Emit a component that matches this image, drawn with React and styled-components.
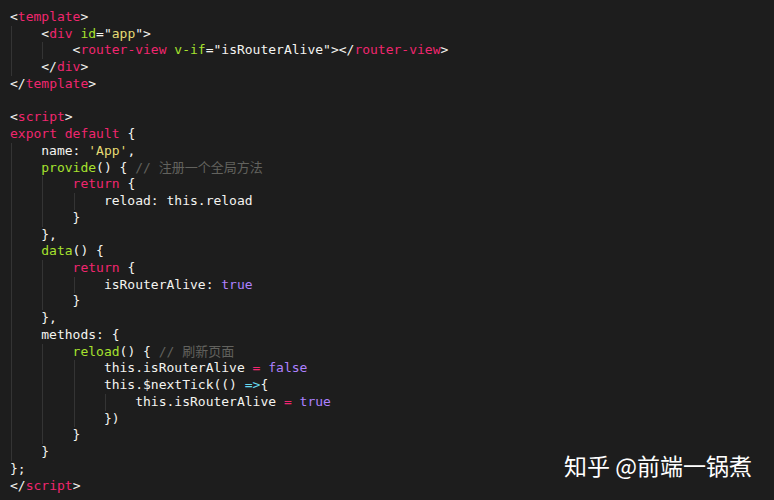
import styled, { createGlobalStyle } from 'styled-components';

const GlobalStyle = createGlobalStyle`
  html, body {
    margin: 0;
    padding: 0;
    background: #1d1d1d;
  }
`;

const Editor = styled.div`
  position: relative;
  width: 774px;
  height: 500px;
  overflow: hidden;
  background: #1d1d1d;
  padding: 9px 0 0 10px;
  box-sizing: border-box;
  font-family: 'DejaVu Sans Mono', 'Noto Sans CJK SC', monospace;
  font-size: 13px;
  color: #f4f4f0;
`;

const Line = styled.div`
  height: 16.74px;
  line-height: 16.74px;
  white-space: pre;
`;

const Indent = styled.span`
  display: inline-block;
  width: 4ch;
  height: 16.74px;
  vertical-align: top;
  box-sizing: border-box;
  margin-left: 1px;
  margin-right: -1px;
  border-left: 1px solid #343434;
`;

const colors = {
  p: '#f4f4f0',
  tag: '#f0266f',
  kw: '#f0266f',
  op: '#f0266f',
  attr: '#a6e22e',
  fn: '#a6e22e',
  str: '#e6db74',
  bool: '#ae81ff',
  arrow: '#66d9ef',
  cm: '#62625e',
};

const Token = styled.span`
  color: ${(p) => colors[p.$kind]};
`;

const Watermark = styled.div`
  position: absolute;
  right: 22px;
  top: 451px;
  font-family: 'Noto Sans CJK SC', 'Noto Sans', sans-serif;
  font-size: 23px;
  line-height: 28px;
  color: #ffffff;
  white-space: pre;
`;

const code = [
  [0, [['p', '<'], ['tag', 'template'], ['p', '>']]],
  [1, [['p', '<'], ['tag', 'div'], ['p', ' '], ['attr', 'id'], ['p', '="'], ['str', 'app'], ['p', '">']]],
  [2, [['p', '<'], ['tag', 'router-view'], ['p', ' '], ['attr', 'v-if'], ['p', '="isRouterAlive"></'], ['tag', 'router-view'], ['p', '>']]],
  [1, [['p', '</'], ['tag', 'div'], ['p', '>']]],
  [0, [['p', '</'], ['tag', 'template'], ['p', '>']]],
  [0, []],
  [0, [['p', '<'], ['tag', 'script'], ['p', '>']]],
  [0, [['kw', 'export'], ['p', ' '], ['kw', 'default'], ['p', ' {']]],
  [1, [['p', 'name: '], ['str', "'App'"], ['p', ',']]],
  [1, [['fn', 'provide'], ['p', '() { '], ['cm', '// 注册一个全局方法']]],
  [2, [['kw', 'return'], ['p', ' {']]],
  [3, [['p', 'reload: this.reload']]],
  [2, [['p', '}']]],
  [1, [['p', '},']]],
  [1, [['fn', 'data'], ['p', '() {']]],
  [2, [['kw', 'return'], ['p', ' {']]],
  [3, [['p', 'isRouterAlive: '], ['bool', 'true']]],
  [2, [['p', '}']]],
  [1, [['p', '},']]],
  [1, [['p', 'methods: {']]],
  [2, [['fn', 'reload'], ['p', '() { '], ['cm', '// 刷新页面']]],
  [3, [['p', 'this.isRouterAlive '], ['op', '='], ['p', ' '], ['bool', 'false']]],
  [3, [['p', 'this.$nextTick(() '], ['arrow', '=>'], ['p', '{']]],
  [4, [['p', 'this.isRouterAlive '], ['op', '='], ['p', ' '], ['bool', 'true']]],
  [3, [['p', '})']]],
  [2, [['p', '}']]],
  [1, [['p', '}']]],
  [0, [['p', '};']]],
  [0, [['p', '</'], ['tag', 'script'], ['p', '>']]],
];

const App = () => (
  <>
    <GlobalStyle />
    <Editor>
      {code.map(([indent, tokens], i) => (
        <Line key={i}>
          {Array.from({ length: indent }).map((_, j) => (
            <Indent key={j} />
          ))}
          {tokens.map(([kind, text], j) => (
            <Token key={j} $kind={kind}>
              {text}
            </Token>
          ))}
        </Line>
      ))}
      <Watermark>知乎 @前端一锅煮</Watermark>
    </Editor>
  </>
);

export default App;
